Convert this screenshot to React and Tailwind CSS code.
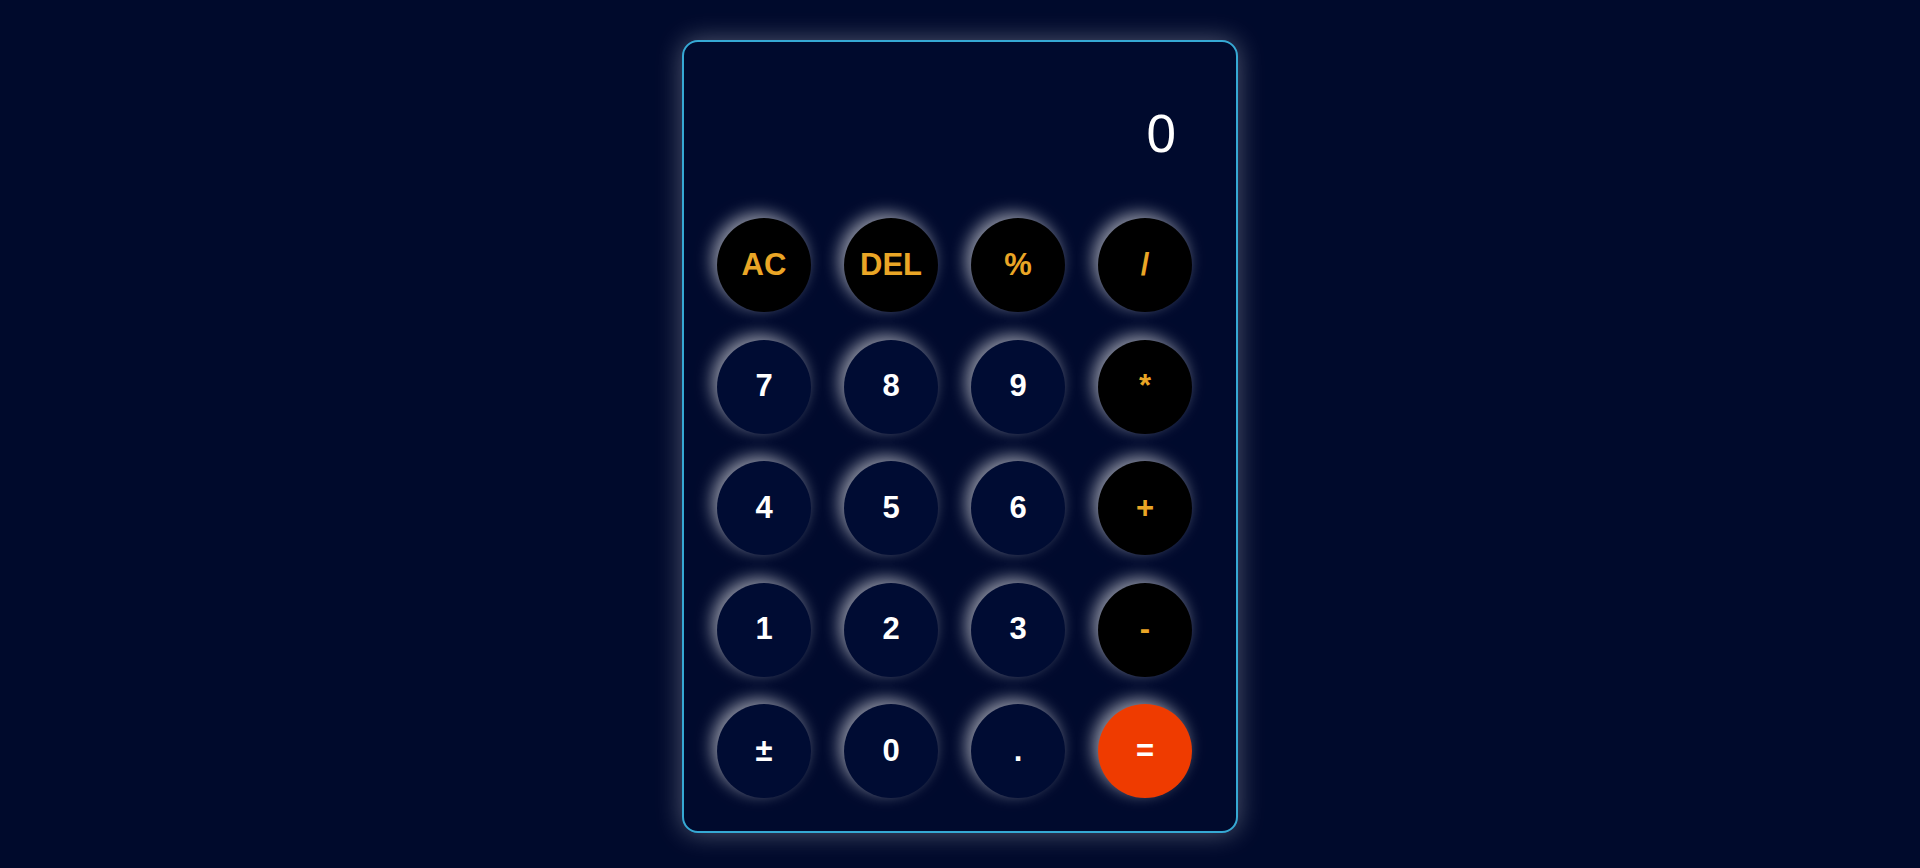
const keys = [
  { label: 'AC', kind: 'op' },
  { label: 'DEL', kind: 'op' },
  { label: '%', kind: 'op' },
  { label: '/', kind: 'op' },
  { label: '7', kind: 'num' },
  { label: '8', kind: 'num' },
  { label: '9', kind: 'num' },
  { label: '*', kind: 'op' },
  { label: '4', kind: 'num' },
  { label: '5', kind: 'num' },
  { label: '6', kind: 'num' },
  { label: '+', kind: 'op' },
  { label: '1', kind: 'num' },
  { label: '2', kind: 'num' },
  { label: '3', kind: 'num' },
  { label: '-', kind: 'op' },
  { label: '±', kind: 'num' },
  { label: '0', kind: 'num' },
  { label: '.', kind: 'num' },
  { label: '=', kind: 'eq' },
];

const styles = {
  num: 'bg-[#000c33] text-white',
  op: 'bg-black text-[#eaa626]',
  eq: 'bg-[#ef3b00] text-white',
};

const App = () => {
  return (
    <div className="min-h-screen bg-[#000a2c] flex justify-center pt-[40px] font-['Liberation_Sans',Arial,sans-serif]">
      <div className="w-[556px] h-[793px] bg-[#000a2d] border-2 border-[#36a9d4] rounded-2xl shadow-[0_0_26px_rgba(255,255,255,0.32)]">
        {/* Display */}
        <div className="pt-[65px] pr-[60px] text-right text-white text-[53px] leading-none">0</div>

        {/* Keypad */}
        <div className="mt-[58px] pl-[33px] grid grid-cols-[repeat(4,94px)] gap-x-[33px] gap-y-[27.5px]">
          {keys.map((key) => (
            <button
              key={key.label}
              className={`w-[94px] h-[94px] rounded-full flex items-center justify-center text-[31px] font-bold shadow-[-5px_-5px_16px_rgba(255,255,255,0.55)] ${styles[key.kind]}`}
            >
              {key.label}
            </button>
          ))}
        </div>
      </div>
    </div>
  );
};

export default App;
